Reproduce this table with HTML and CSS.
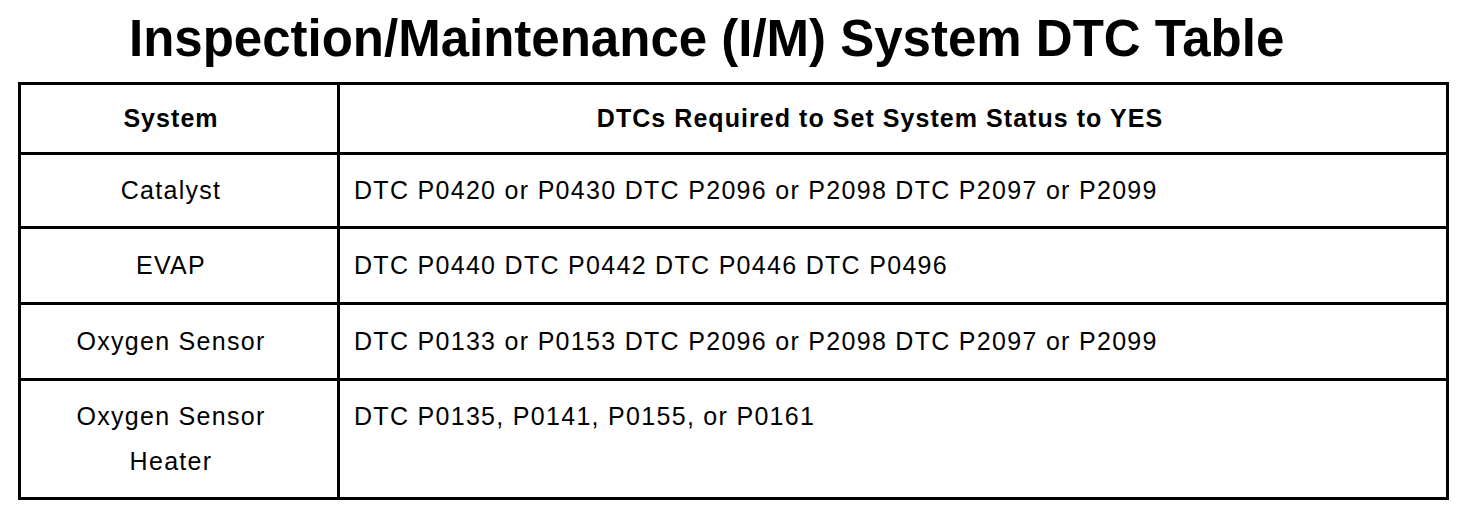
FILE: index.html
```html
<!DOCTYPE html>
<html lang="en">
<head>
<meta charset="utf-8">
<title>Inspection/Maintenance (I/M) System DTC Table</title>
<link rel="stylesheet" href="styles.css">
</head>
<body>
<div class="page">
  <h1 class="title">Inspection/Maintenance (I/M) System DTC Table</h1>
  <table class="dtc-table">
    <thead>
      <tr class="row row-head">
        <th class="cell cell-system">System</th>
        <th class="cell cell-dtc-head">DTCs Required to Set System Status to YES</th>
      </tr>
    </thead>
    <tbody>
      <tr class="row">
        <td class="cell cell-system">Catalyst</td>
        <td class="cell cell-dtc">DTC P0420 or P0430 DTC P2096 or P2098 DTC P2097 or P2099</td>
      </tr>
      <tr class="row row-tall">
        <td class="cell cell-system">EVAP</td>
        <td class="cell cell-dtc">DTC P0440 DTC P0442 DTC P0446 DTC P0496</td>
      </tr>
      <tr class="row row-tall">
        <td class="cell cell-system">Oxygen Sensor</td>
        <td class="cell cell-dtc">DTC P0133 or P0153 DTC P2096 or P2098 DTC P2097 or P2099</td>
      </tr>
      <tr class="row">
        <td class="cell cell-system">Oxygen Sensor<br>Heater</td>
        <td class="cell cell-dtc">DTC P0135, P0141, P0155, or P0161</td>
      </tr>
    </tbody>
  </table>
</div>
</body>
</html>
```

FILE: styles.css
```css
html, body {
  margin: 0;
  padding: 0;
  background: #ffffff;
  color: #000000;
  font-family: "Liberation Sans", Arial, sans-serif;
}

.page {
  padding: 9px 0 0 18px;
}

.title {
  margin: 0 0 13px 0;
  padding-left: 111px;
  font-size: 51px;
  line-height: 60px;
  font-weight: bold;
  white-space: nowrap;
}

.dtc-table {
  box-sizing: border-box;
  width: 1431px;
  border-collapse: separate;
  border-spacing: 0;
  border-top: 3px solid #000;
  border-left: 3px solid #000;
  table-layout: fixed;
}

.cell {
  border-right: 3px solid #000;
  border-bottom: 3px solid #000;
  padding: 13px 0;
  font-size: 25px;
  line-height: 45px;
  letter-spacing: 1.3px;
  vertical-align: top;
  font-weight: normal;
  white-space: nowrap;
}

.row-head .cell {
  padding-top: 11px;
  padding-bottom: 11px;
  font-weight: bold;
  letter-spacing: 1.05px;
}

.row-tall .cell {
  padding-top: 14px;
  padding-bottom: 14px;
}

.cell-system {
  box-sizing: border-box;
  width: 319px;
  text-align: center;
  padding-left: 4px;
  padding-right: 20px;
}

.cell-dtc-head {
  text-align: center;
  padding-left: 0;
  padding-right: 26px;
}

.cell-dtc {
  text-align: left;
  padding-left: 14px;
}
```
